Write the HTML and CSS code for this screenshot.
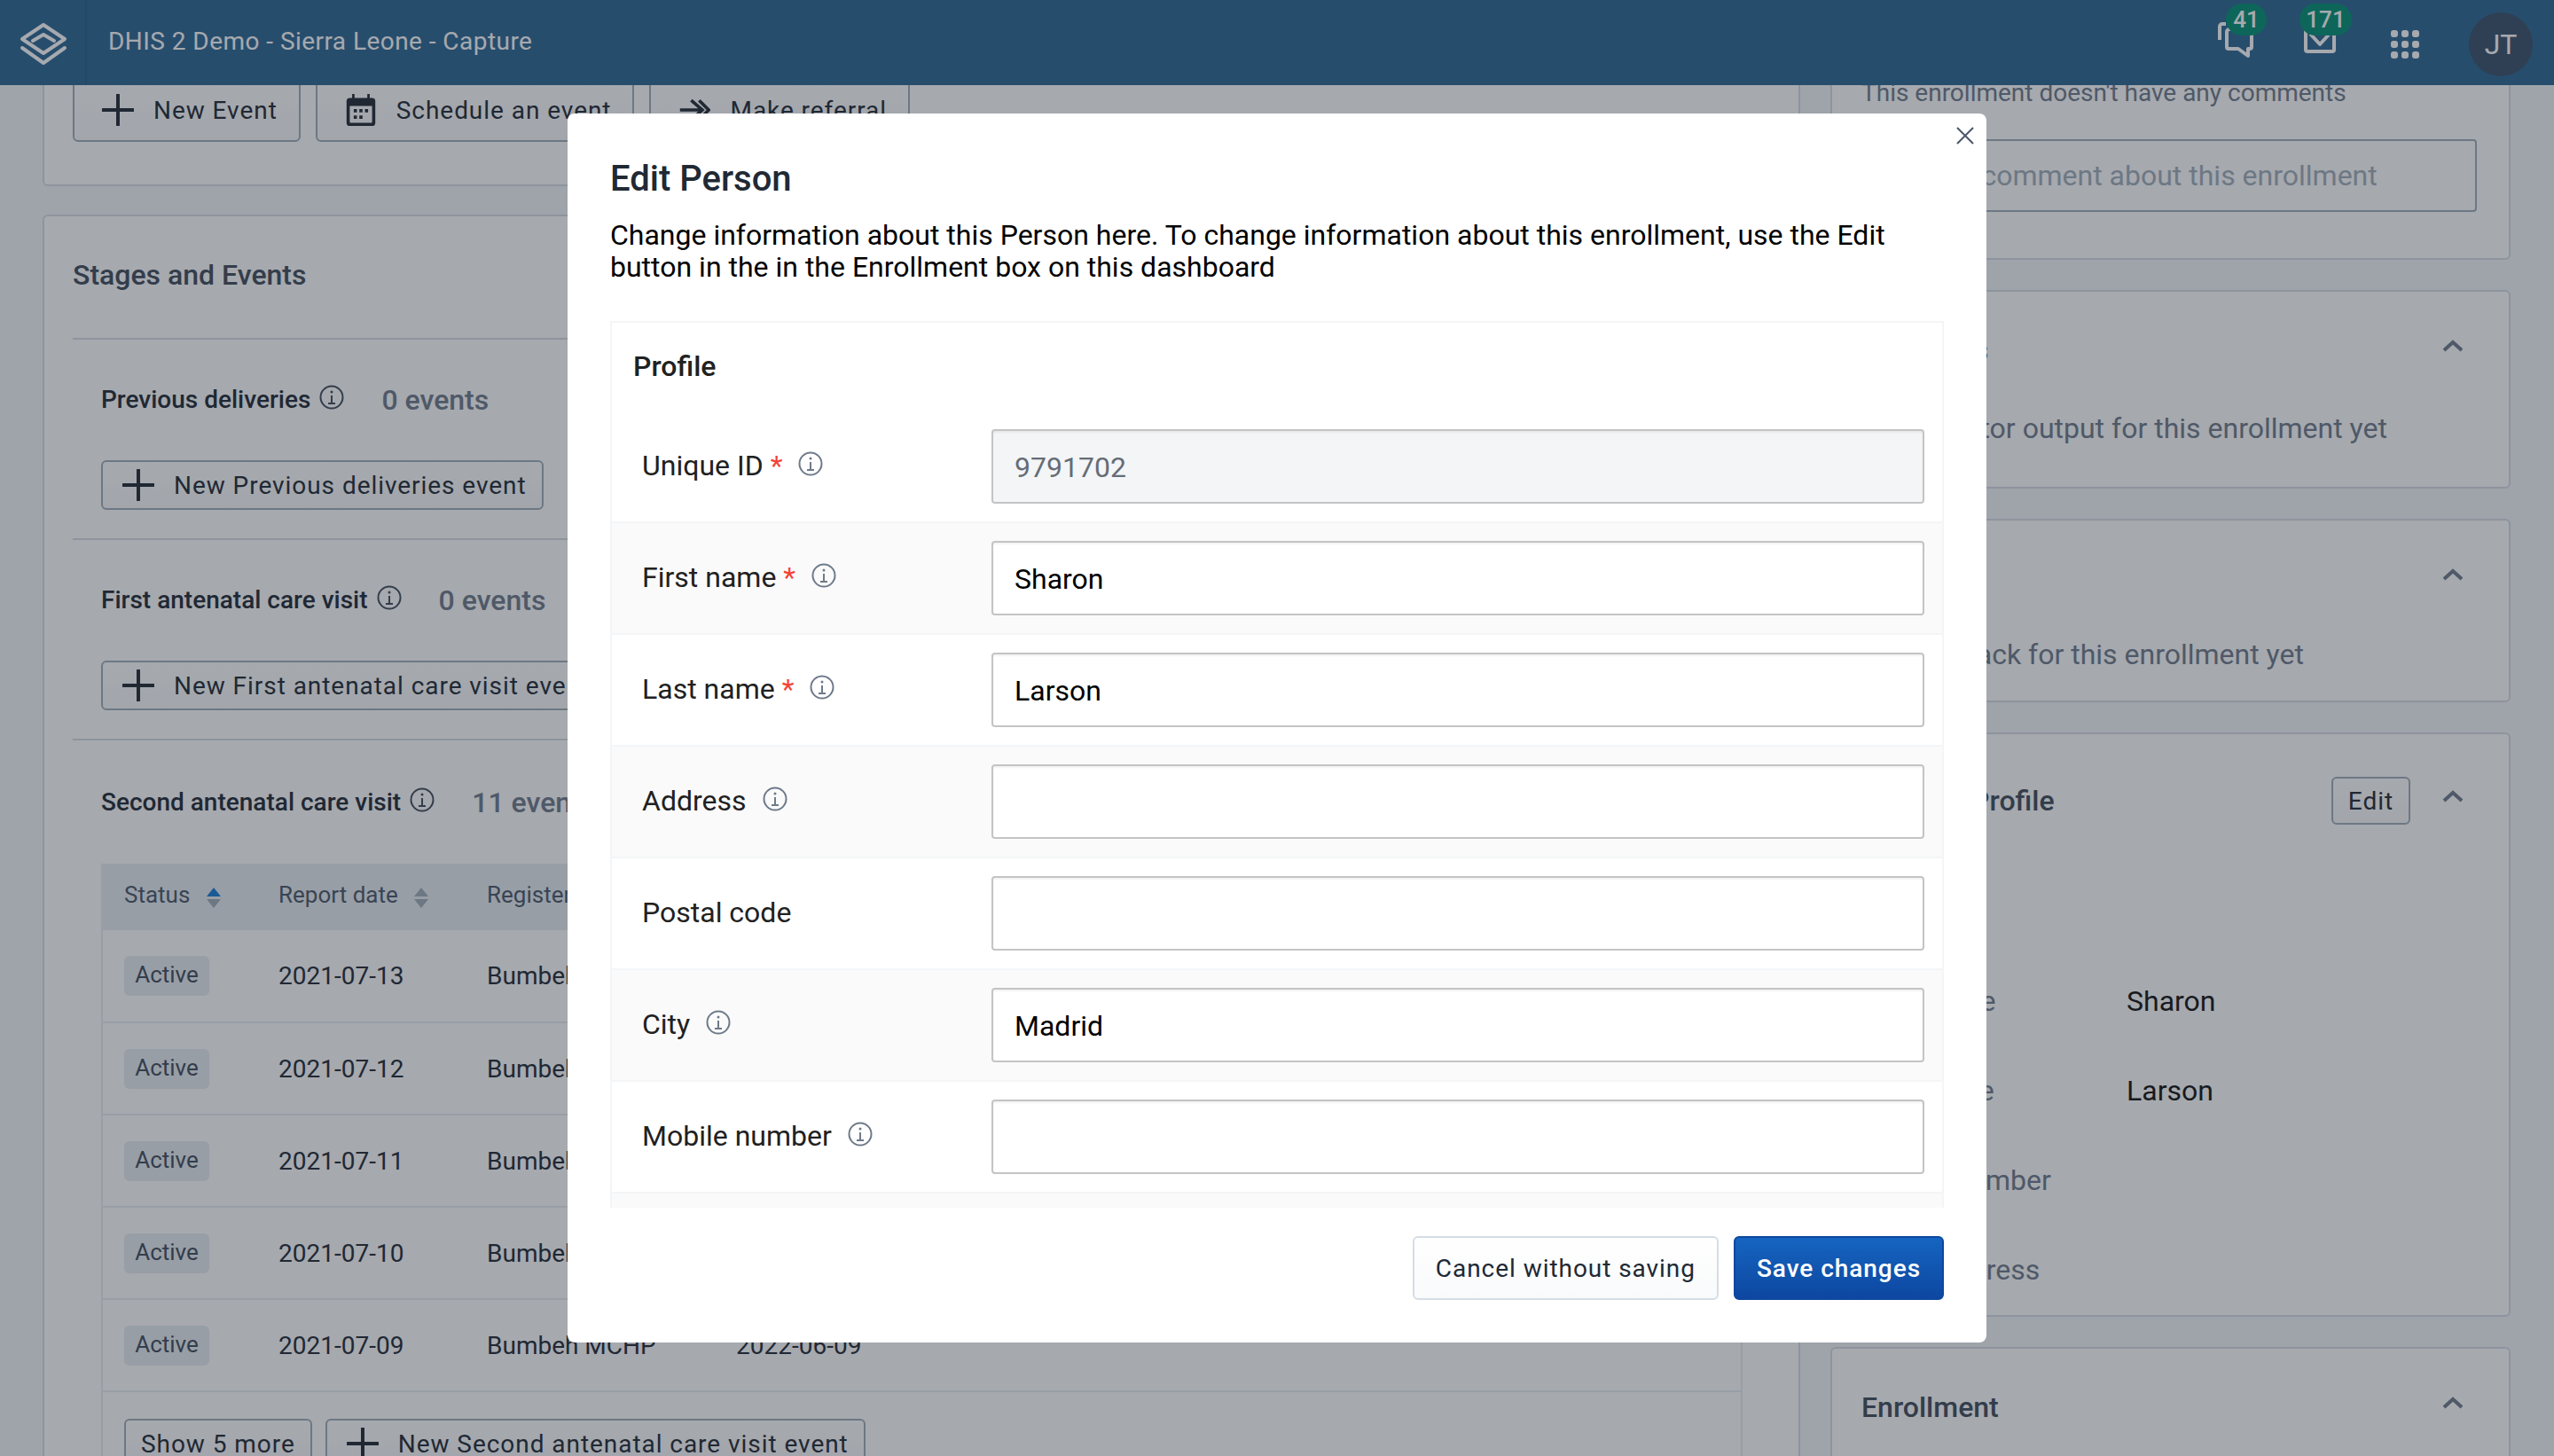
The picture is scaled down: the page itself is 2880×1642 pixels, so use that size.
FILE: index.html
```html
<!DOCTYPE html>
<html lang="en">
<head>
  <meta charset="UTF-8" />
  <meta name="viewport" content="width=device-width, initial-scale=1.0"/>
  <title>DHIS 2 Demo - Sierra Leone - Capture</title>
  <link rel="stylesheet" href="styles.css">
</head>
<body>

  <svg class="sprites" width="0" height="0">
    <symbol id="plus" viewBox="0 0 36 36"><path d="M18 1V35M1 18H35" fill="none" stroke="currentColor" stroke-width="4" stroke-linecap="round"/></symbol>
    <symbol id="info" viewBox="0 0 28 28"><circle cx="14" cy="14" r="12.5" fill="none" stroke="currentColor" stroke-width="2"/><path d="M14 12V21M10 21H18" fill="none" stroke="currentColor" stroke-width="2"/><circle cx="14" cy="8" r="1.5" fill="currentColor"/></symbol>
    <symbol id="chevron" viewBox="0 0 24 14"><path d="M2 12L12 3L22 12" fill="none" stroke="currentColor" stroke-width="4"/></symbol>
    <symbol id="sort" viewBox="0 0 16 23"><path class="sort-up" d="M8 0L16 10H0Z"/><path d="M0 13H16L8 23Z"/></symbol>
  </svg>

  <header class="topbar">
    <div class="logo-cell">
      <svg class="logo" width="54" height="50" viewBox="0 0 54 50" fill="none" stroke="#fff" stroke-width="4" stroke-linejoin="round" stroke-linecap="round">
        <path d="M27 4L51 20L27 36L3 20Z"/>
        <path d="M15 22L27 15L39 22"/>
        <path d="M3 30L27 47L51 30"/>
      </svg>
    </div>
    <div class="app-title">DHIS 2 Demo - Sierra Leone - Capture</div>
    <div class="top-actions">
      <div class="top-icon top-messages">
        <svg width="44" height="44" viewBox="0 0 44 44" fill="none" stroke="#fff" stroke-width="4" stroke-linejoin="round">
          <path d="M3 21V6a3 3 0 0 1 3-3H10"/>
          <path d="M11 12a3 3 0 0 1 3-3H39V29a2 2 0 0 1-2 2H35V39L24 31H13a2 2 0 0 1-2-2Z"/>
        </svg>
        <span class="badge badge-messages">41</span>
      </div>
      <div class="top-icon top-mail">
        <svg width="40" height="40" viewBox="0 0 40 40" fill="none" stroke="#fff" stroke-width="4" stroke-linejoin="round">
          <rect x="4" y="4" width="32" height="32" rx="2"/>
          <path d="M9 16L20 28L31 16"/>
        </svg>
        <span class="badge badge-mail">171</span>
      </div>
      <div class="apps-grid">
        <span></span><span></span><span></span>
        <span></span><span></span><span></span>
        <span></span><span></span><span></span>
      </div>
      <div class="avatar">JT</div>
    </div>
  </header>

  <main class="page">
    <section class="col-left">
      <div class="card actions-card">
        <div class="btn-row">
          <button class="btn btn-big"><svg class="btn-icon"><use href="#plus"/></svg>New Event</button>
          <button class="btn btn-big">
            <svg class="btn-icon" viewBox="0 0 36 40"><path fill-rule="evenodd" fill="currentColor" d="M7 0H10V5H26V0H29V5H32a4 4 0 0 1 4 4V36a4 4 0 0 1-4 4H4a4 4 0 0 1-4-4V9a4 4 0 0 1 4-4H7ZM4 15V35a1 1 0 0 0 1 1H31a1 1 0 0 0 1-1V15ZM16 19h4v4h-4ZM23 19h4v4h-4ZM9 19h4v4H9ZM9 27h4v4H9ZM16 27h4v4h-4Z"/></svg>
            Schedule an event
          </button>
          <button class="btn btn-big">
            <svg class="btn-icon" viewBox="0 0 40 36"><path d="M2 18H30M16 6L30 18L16 30M26 6L38 18L26 30" fill="none" stroke="currentColor" stroke-width="4"/></svg>
            Make referral
          </button>
        </div>
      </div>

      <div class="card stages-card">
        <h2 class="stages-title">Stages and Events</h2>

        <div class="stage">
          <div class="stage-head">
            <span class="stage-name">Previous deliveries</span>
            <svg class="info"><use href="#info"/></svg>
            <span class="stage-count">0 events</span>
          </div>
          <button class="btn btn-small"><svg class="btn-icon"><use href="#plus"/></svg>New Previous deliveries event</button>
        </div>

        <div class="stage">
          <div class="stage-head">
            <span class="stage-name">First antenatal care visit</span>
            <svg class="info"><use href="#info"/></svg>
            <span class="stage-count">0 events</span>
          </div>
          <button class="btn btn-small"><svg class="btn-icon"><use href="#plus"/></svg>New First antenatal care visit event</button>
        </div>

        <div class="stage stage-last">
          <div class="stage-head">
            <span class="stage-name">Second antenatal care visit</span>
            <svg class="info"><use href="#info"/></svg>
            <span class="stage-count">11 events</span>
          </div>
          <div class="events">
            <table>
              <thead>
                <tr>
                  <th class="col-status">Status <svg class="sort sort-active"><use href="#sort"/></svg></th>
                  <th class="col-date">Report date <svg class="sort"><use href="#sort"/></svg></th>
                  <th class="col-unit">Registering unit</th>
                  <th>Due date</th>
                </tr>
              </thead>
              <tbody>
                <tr><td><span class="tag">Active</span></td><td>2021-07-13</td><td>Bumbeh MCHP</td><td>2022-06-13</td></tr>
                <tr><td><span class="tag">Active</span></td><td>2021-07-12</td><td>Bumbeh MCHP</td><td>2022-06-12</td></tr>
                <tr><td><span class="tag">Active</span></td><td>2021-07-11</td><td>Bumbeh MCHP</td><td>2022-06-11</td></tr>
                <tr><td><span class="tag">Active</span></td><td>2021-07-10</td><td>Bumbeh MCHP</td><td>2022-06-10</td></tr>
                <tr><td><span class="tag">Active</span></td><td>2021-07-09</td><td>Bumbeh MCHP</td><td>2022-06-09</td></tr>
              </tbody>
            </table>
            <div class="events-foot">
              <button class="btn btn-small btn-more">Show 5 more</button>
              <button class="btn btn-small"><svg class="btn-icon"><use href="#plus"/></svg>New Second antenatal care visit event</button>
            </div>
          </div>
        </div>
      </div>
    </section>

    <aside class="col-right">
      <div class="card comments-card">
        <p class="side-text-small">This enrollment doesn't have any comments</p>
        <div class="fake-input">Write a comment about this enrollment</div>
      </div>

      <div class="card side-card">
        <div class="side-head">
          <h3>Indicators</h3>
          <svg class="chevron"><use href="#chevron"/></svg>
        </div>
        <p class="side-text">No indicator output for this enrollment yet</p>
      </div>

      <div class="card side-card feedback-card">
        <div class="side-head">
          <h3>Feedback</h3>
          <svg class="chevron"><use href="#chevron"/></svg>
        </div>
        <p class="side-text">No feedback for this enrollment yet</p>
      </div>

      <div class="card side-card profile-card">
        <div class="side-head side-head-edit">
          <h3>Person Profile</h3>
          <button class="btn btn-edit">Edit</button>
          <svg class="chevron"><use href="#chevron"/></svg>
        </div>
        <dl class="profile-list">
          <dt>Unique ID</dt><dd></dd>
          <dt>First name</dt><dd>Sharon</dd>
          <dt>Last name</dt><dd>Larson</dd>
          <dt>Mobile number</dt><dd></dd>
          <dt>Email address</dt><dd></dd>
        </dl>
      </div>

      <div class="card side-card">
        <div class="side-head">
          <h3>Enrollment</h3>
          <svg class="chevron"><use href="#chevron"/></svg>
        </div>
      </div>
    </aside>
  </main>

  <div class="backdrop">
    <div class="modal">
      <button class="modal-close" aria-label="Close">
        <svg width="20" height="20" viewBox="0 0 20 20"><path d="M1 1L19 19M19 1L1 19" fill="none" stroke="currentColor" stroke-width="2"/></svg>
      </button>
      <h1 class="modal-title">Edit Person</h1>
      <p class="modal-text">Change information about this Person here. To change information about this enrollment, use the Edit button in the in the Enrollment box on this dashboard</p>

      <div class="form-scroll">
        <div class="form-section">
          <h2 class="section-title">Profile</h2>

          <div class="form-row">
            <label class="form-label">Unique ID<span class="req">*</span><svg class="info"><use href="#info"/></svg></label>
            <input class="form-input" type="text" value="9791702" disabled>
          </div>
          <div class="form-row">
            <label class="form-label">First name<span class="req">*</span><svg class="info"><use href="#info"/></svg></label>
            <input class="form-input" type="text" value="Sharon">
          </div>
          <div class="form-row">
            <label class="form-label">Last name<span class="req">*</span><svg class="info"><use href="#info"/></svg></label>
            <input class="form-input" type="text" value="Larson">
          </div>
          <div class="form-row">
            <label class="form-label">Address<svg class="info"><use href="#info"/></svg></label>
            <input class="form-input" type="text">
          </div>
          <div class="form-row">
            <label class="form-label">Postal code</label>
            <input class="form-input" type="text">
          </div>
          <div class="form-row">
            <label class="form-label">City<svg class="info"><use href="#info"/></svg></label>
            <input class="form-input" type="text" value="Madrid">
          </div>
          <div class="form-row">
            <label class="form-label">Mobile number<svg class="info"><use href="#info"/></svg></label>
            <input class="form-input" type="text">
          </div>
          <div class="form-row">
            <label class="form-label">Email</label>
            <input class="form-input" type="text">
          </div>
        </div>
      </div>

      <div class="modal-foot">
        <button class="btn btn-cancel">Cancel without saving</button>
        <button class="btn btn-save">Save changes</button>
      </div>
    </div>
  </div>

</body>
</html>
```

FILE: styles.css
```css
* {
  box-sizing: border-box;
}

body {
  margin: 0;
  height: 1642px;
  overflow: hidden;
  font-family: Roboto, "Liberation Sans", sans-serif;
  background-color: #f4f6f8;
  color: #212934;
}

h1, h2, h3, p, dl, dd {
  margin: 0;
}

.sprites {
  display: block;
  height: 0;
}

/* top bar */

.topbar {
  display: flex;
  align-items: center;
  height: 96px;
  background-color: #2c6693;
  color: #fff;
  position: relative;
  z-index: 1;
}

.logo-cell {
  display: flex;
  justify-content: center;
  align-items: center;
  width: 98px;
  height: 96px;
  border-right: 2px solid #2b5f89;
}

.logo {
  display: block;
  margin: 2px -2px 0 0;
}

.app-title {
  padding: 0 0 2px 24px;
  font-size: 28px;
  line-height: 36px;
  letter-spacing: 0.45px;
}

.top-actions {
  display: flex;
  align-items: center;
  margin-left: auto;
  padding-right: 24px;
}

.top-icon {
  position: relative;
}

.top-icon svg {
  display: block;
}

.top-messages {
  margin-right: 52px;
  margin-top: -4px;
}

.top-mail {
  margin-right: 60px;
  margin-top: -12px;
}

.badge {
  position: absolute;
  display: block;
  height: 36px;
  border-radius: 18px;
  background-color: #008f72;
  color: #fff;
  font-size: 26px;
  font-weight: 500;
  line-height: 36px;
  text-align: center;
}

.badge-messages {
  top: -20px;
  left: 10px;
  width: 46px;
}

.badge-mail {
  top: -18px;
  left: -3px;
  width: 59px;
}

.apps-grid {
  display: grid;
  grid-template-columns: repeat(3, 8px);
  grid-auto-rows: 8px;
  gap: 4px;
  margin-right: 56px;
  margin-top: 4px;
}

.apps-grid span {
  background-color: #fff;
  border-radius: 3px;
}

.avatar {
  width: 72px;
  height: 72px;
  margin-top: 4px;
  border-radius: 50%;
  background-color: #39516c;
  font-size: 32px;
  line-height: 72px;
  text-align: center;
}

/* page behind the dialog */

.page {
  display: flex;
  gap: 34px;
  height: 1546px;
  padding-left: 48px;
  overflow: hidden;
}

.col-left {
  flex: none;
  width: 1982px;
}

.col-right {
  flex: none;
  width: 767px;
}

.card {
  background-color: #fff;
  border: 2px solid #d5dde5;
  border-radius: 6px;
}

.btn {
  display: inline-flex;
  align-items: center;
  height: 56px;
  padding: 0 18px;
  background: linear-gradient(#fff, #f9fafb);
  border: 2px solid #a0adba;
  border-radius: 6px;
  color: #212934;
  font-family: inherit;
  font-size: 28px;
  letter-spacing: 0.95px;
  white-space: nowrap;
}

.btn-icon {
  flex: none;
  width: 36px;
  height: 36px;
  margin-right: 22px;
}

.actions-card {
  margin-top: -41px;
  padding: 31px 32px 48px;
}

.btn-row {
  display: flex;
  gap: 17px;
}

.btn-big {
  height: 72px;
  padding: 0 24px 0 31px;
}

.btn-small {
  padding: 0 17px 0 22px;
}

.stages-card {
  margin-top: 32px;
  padding: 46px 32px 0;
}

.stages-title {
  padding-bottom: 51px;
  border-bottom: 2px solid #d5dde5;
  color: #404b5a;
  font-size: 32px;
  font-weight: 500;
  line-height: 40px;
}

.stage {
  padding: 50px 0 32px 32px;
  border-bottom: 2px solid #d5dde5;
}

.stage-last {
  padding-top: 52px;
  border-bottom: 0;
}

.stage-head {
  display: flex;
  align-items: center;
  height: 36px;
  margin-bottom: 50px;
}

.stage-last .stage-head {
  margin-bottom: 51px;
}

.stage-name {
  font-size: 28px;
  font-weight: 500;
  line-height: 36px;
}

.info {
  flex: none;
  width: 28px;
  height: 28px;
  color: #6e7a8a;
}

.stage-head .info {
  margin: -6px 0 0 10px;
  color: #404b5a;
}

.stage-count {
  margin-left: 42px;
  color: #6e7a8a;
  font-size: 32px;
  font-weight: 500;
}

.events {
  width: 1851px;
  border-left: 2px solid #e8edf2;
  border-right: 2px solid #e8edf2;
}

table {
  width: 100%;
  border-collapse: collapse;
  table-layout: fixed;
}

th {
  height: 75px;
  padding: 0 0 6px 24px;
  background-color: #e8edf2;
  color: #4a5768;
  font-size: 26px;
  font-weight: 400;
  text-align: left;
}

td {
  height: 104px;
  padding: 0 0 0 24px;
  border-bottom: 2px solid #e8edf2;
  font-size: 28px;
}

.col-status {
  width: 174px;
}

.col-date {
  width: 235px;
}

.col-unit {
  width: 281px;
}

.sort {
  --up: #a0adba;
  width: 16px;
  height: 23px;
  margin-left: 12px;
  vertical-align: -6px;
  fill: #a0adba;
}

.sort-active {
  --up: #147cd7;
}

.sort-up {
  fill: var(--up);
}

.tag {
  display: inline-block;
  width: 96px;
  height: 45px;
  background-color: #e8edf2;
  border-radius: 6px;
  color: #404b5a;
  font-size: 26px;
  line-height: 42px;
  text-align: center;
}

.events-foot {
  display: flex;
  gap: 15px;
  padding: 30px 24px;
}

.btn-more {
  padding: 0 17px;
}

/* right column */

.comments-card {
  margin-top: -60px;
  padding: 49px 36px 52px 33px;
}

.side-text-small {
  color: #6e7a8a;
  font-size: 28px;
  line-height: 36px;
}

.fake-input {
  height: 82px;
  margin-top: 34px;
  padding-left: 26px;
  background-color: #fff;
  border: 2px solid #a0adba;
  border-radius: 4px;
  color: #a0adba;
  font-size: 32px;
  line-height: 78px;
}

.side-card {
  margin-top: 34px;
  padding: 0 51px 46px 33px;
}

.side-head {
  display: flex;
  align-items: center;
  padding-top: 46px;
}

.side-head h3 {
  margin-right: auto;
  color: #404b5a;
  font-size: 32px;
  font-weight: 500;
  line-height: 40px;
}

.chevron {
  flex: none;
  width: 24px;
  height: 14px;
  margin-bottom: 10px;
  color: #6e7a8a;
}

.side-text {
  margin-top: 48px;
  color: #6e7a8a;
  font-size: 32px;
  line-height: 40px;
  white-space: nowrap;
}

.feedback-card {
  padding-bottom: 32px;
}

.feedback-card .side-text {
  margin-top: 45px;
}

.side-head-edit {
  padding-top: 48px;
}

.side-head-edit h3 {
  word-spacing: 15px;
}

.btn-edit {
  height: 54px;
  margin-right: 36px;
  padding: 0 17px;
}

.profile-card {
  padding-bottom: 31px;
}

.profile-list {
  display: grid;
  grid-template-columns: 299px 1fr;
  grid-auto-rows: 40px;
  row-gap: 61px;
  margin-top: 78px;
  color: #6e7a8a;
  font-size: 32px;
  line-height: 40px;
}

.profile-list dd {
  color: #111;
}

/* dialog */

.backdrop {
  position: fixed;
  top: 0;
  left: 0;
  right: 0;
  bottom: 0;
  z-index: 2;
  display: flex;
  justify-content: center;
  align-items: center;
  background-color: rgba(33, 41, 52, 0.4);
}

.modal {
  position: relative;
  width: 1600px;
  padding: 50px 48px 48px;
  background-color: #fff;
  border-radius: 8px;
}

.modal-close {
  position: absolute;
  top: 15px;
  right: 14px;
  padding: 0;
  background: none;
  border: 0;
  color: #4a5768;
}

.modal-close svg {
  display: block;
}

.modal-title {
  color: #212934;
  font-size: 40px;
  font-weight: 500;
  line-height: 48px;
}

.modal-text {
  margin-top: 21px;
  color: #000;
  font-size: 32px;
  line-height: 36px;
}

.form-scroll {
  height: 1000px;
  margin-top: 43px;
  overflow: hidden;
}

.form-section {
  border: 2px solid #f3f5f7;
  border-bottom: 0;
}

.section-title {
  padding: 29px 24px 31px;
  color: #212121;
  font-size: 32px;
  font-weight: 500;
  line-height: 40px;
}

.form-row {
  display: grid;
  grid-template-columns: 394px 1fr;
  align-items: center;
  padding: 20px 20px 20px 34px;
  border-bottom: 2px solid #f3f5f7;
}

.form-row:nth-of-type(even) {
  background-color: #fafafa;
}

.form-label {
  display: flex;
  align-items: center;
  padding-bottom: 3px;
  color: #212121;
  font-size: 32px;
}

.req {
  margin-left: 8px;
  color: #f44336;
}

.form-label .info {
  margin-left: 18px;
  margin-top: -4px;
}

.form-input {
  width: 100%;
  height: 84px;
  padding: 2px 24px 0;
  background-color: #fff;
  border: 2px solid #c4c4c4;
  border-radius: 4px;
  box-shadow: inset 0 2px 2px rgba(0, 0, 0, 0.05);
  color: #000;
  font-family: inherit;
  font-size: 32px;
}

.form-input:disabled {
  background-color: #f3f5f7;
  color: #666c75;
}

.modal-foot {
  display: flex;
  justify-content: flex-end;
  gap: 17px;
  margin-top: 32px;
}

.btn-cancel,
.btn-save {
  height: 72px;
  padding: 0 24px;
}

.btn-cancel {
  border-color: #d5dde5;
}

.btn-save {
  background: linear-gradient(#1565c0, #0d47a1);
  border-color: #0d47a1;
  color: #fff;
  font-weight: 500;
}
```
